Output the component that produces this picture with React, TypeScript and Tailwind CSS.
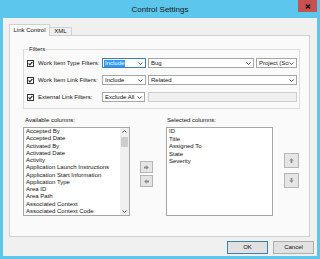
import React from "react";

function Chevron() {
  return (
    <svg width="5" height="3" viewBox="0 0 5 3" className="shrink-0">
      <polyline points="0.5,0.5 2.5,2.5 4.5,0.5" fill="none" stroke="#333" strokeWidth="0.9" />
    </svg>
  );
}

function Check() {
  return (
    <div className="w-[7px] h-[7px] border border-[#333] bg-white flex items-center justify-center shrink-0">
      <svg width="5" height="5" viewBox="0 0 5 5">
        <polyline points="0.6,2.4 1.9,3.8 4.4,0.8" fill="none" stroke="#222" strokeWidth="1.1" />
      </svg>
    </div>
  );
}

function Combo({ text, w, focused, highlight }: { text: string; w?: string; focused?: boolean; highlight?: boolean }) {
  return (
    <div
      className={`h-[10px] ${w ?? "flex-1"} bg-white border ${focused ? "border-[#3c7fb1]" : "border-[#a6a6a6]"} flex items-center pl-[1px] pr-[2px] overflow-hidden`}
    >
      <div className="flex-1 overflow-hidden whitespace-nowrap">
        {highlight ? (
          <span className="bg-[#3399ff] text-white px-[1px] inline-block leading-[7px]">{text}</span>
        ) : (
          <span className="pl-[1px] leading-[7px]">{text}</span>
        )}
      </div>
      <Chevron />
    </div>
  );
}

function Arrow({ dir }: { dir: "right" | "left" | "up" | "down" }) {
  const rot = { right: 0, left: 180, up: -90, down: 90 }[dir];
  return (
    <svg width="5" height="5" viewBox="0 0 5 5" style={{ transform: `rotate(${rot}deg)` }}>
      <polygon points="0,1.6 2.4,1.6 2.4,0.2 4.8,2.5 2.4,4.8 2.4,3.4 0,3.4" fill="#8c8c8c" />
    </svg>
  );
}

function SmallBtn({ dir, size }: { dir: "right" | "left" | "up" | "down"; size: string }) {
  return (
    <div className={`${size} bg-[#e5e5e5] border border-[#b5b5b5] flex items-center justify-center`}>
      <Arrow dir={dir} />
    </div>
  );
}

const available = [
  "Accepted By",
  "Accepted Date",
  "Activated By",
  "Activated Date",
  "Activity",
  "Application Launch Instructions",
  "Application Start Information",
  "Application Type",
  "Area ID",
  "Area Path",
  "Associated Context",
  "Associated Context Code",
];

const selected = ["ID", "Title", "Assigned To", "State", "Severity"];

export default function App() {
  return (
    <div className="w-[320px] h-[259px] bg-[#5cc6ec] flex flex-col px-[3px] pb-[3px] font-['Liberation_Sans',Arial,sans-serif] text-[6px] text-[#111] overflow-hidden">
      {/* Title bar */}
      <div className="h-[18px] relative flex items-center justify-center shrink-0">
        <span className="text-[8px] text-[#1a1a1a] leading-none mt-[1px]">Control Settings</span>
        <div className="absolute right-0 top-0 w-[19px] h-[12px] bg-[#c75050] flex items-center justify-center">
          <svg width="6" height="5" viewBox="0 0 6 5">
            <path d="M0.8 0.5 L5.2 4.5 M5.2 0.5 L0.8 4.5" stroke="#111" strokeWidth="1.2" />
          </svg>
        </div>
      </div>

      {/* Client area */}
      <div className="flex-1 bg-[#f0f0f0] flex flex-col">
        {/* Tabs */}
        <div className="mt-[6px] ml-[6px] flex items-end h-[11px] relative z-10">
          <div className="w-[41px] h-[12px] bg-[#fafafa] border border-[#d0d0d0] border-b-0 flex items-center justify-center mb-[-1px]">
            Link Control
          </div>
          <div className="w-[22px] h-[8px] bg-[#f0f0f0] border border-[#d0d0d0] border-b-0 border-l-0 flex items-center justify-center">
            XML
          </div>
        </div>

        {/* Tab page */}
        <div className="ml-[6px] mr-[7px] h-[202px] border border-[#d0d0d0] bg-[#fafafa] flex flex-col">
          {/* Filters group */}
          <div className="mt-[13px] ml-[13px] mr-[9px] h-[60px] border border-[#dcdcdc] relative flex flex-col pt-[8px] gap-[7px] pl-[3px] pr-[2px]">
            <span className="absolute top-[-4px] left-[4px] bg-[#fafafa] px-[1px] leading-[7px]">Filters</span>
            <div className="flex items-center h-[10px]">
              <Check />
              <span className="ml-[4px] w-[64px] whitespace-nowrap">Work Item Type Filters:</span>
              <Combo text="Include" w="w-[44px]" focused highlight />
              <div className="w-[2px]" />
              <Combo text="Bug" />
              <div className="w-[2px]" />
              <Combo text="Project (Scope)" w="w-[41px]" />
            </div>
            <div className="flex items-center h-[10px]">
              <Check />
              <span className="ml-[4px] w-[64px] whitespace-nowrap">Work Item Link Filters:</span>
              <Combo text="Include" w="w-[44px]" />
              <div className="w-[2px]" />
              <Combo text="Related" />
            </div>
            <div className="flex items-center h-[10px]">
              <Check />
              <span className="ml-[4px] w-[64px] whitespace-nowrap">External Link Filters:</span>
              <Combo text="Exclude All" w="w-[43px]" />
              <div className="w-[3px]" />
              <div className="flex-1 h-[10px] bg-[#f0f0f0] border border-[#cfcfcf]" />
            </div>
          </div>

          {/* Columns */}
          <div className="mt-[8px] ml-[13px] flex items-start">
            <div className="w-[107px] flex flex-col">
              <span className="ml-[2px] leading-[7px] h-[7px]">Available columns:</span>
              <div className="mt-[3px] h-[89px] border border-[#a6a6a6] bg-white flex">
                <div className="flex-1 pl-[2px] overflow-hidden">
                  {available.map((t) => (
                    <div key={t} className="leading-[7.27px] h-[7.27px] whitespace-nowrap">
                      {t}
                    </div>
                  ))}
                </div>
                <div className="w-[9px] bg-[#f0f0f0] flex flex-col items-center">
                  <div className="h-[8px] flex items-center justify-center rotate-180">
                    <Chevron />
                  </div>
                  <div className="mt-[1px] w-[7px] h-[10px] bg-[#cdcdcd]" />
                  <div className="flex-1" />
                  <div className="h-[8px] flex items-center justify-center">
                    <Chevron />
                  </div>
                </div>
              </div>
            </div>

            <div className="ml-[10px] pt-[44px] flex flex-col gap-[2px]">
              <SmallBtn dir="right" size="w-[13px] h-[12px]" />
              <SmallBtn dir="left" size="w-[13px] h-[12px]" />
            </div>

            <div className="ml-[13px] w-[107px] flex flex-col">
              <span className="ml-[1px] leading-[7px] h-[7px]">Selected columns:</span>
              <div className="mt-[3px] h-[89px] border border-[#a6a6a6] bg-white pl-[2px]">
                {selected.map((t) => (
                  <div key={t} className="leading-[7.6px] h-[7.6px] whitespace-nowrap">
                    {t}
                  </div>
                ))}
              </div>
            </div>

            <div className="ml-[11px] pt-[36px] flex flex-col gap-[5px]">
              <SmallBtn dir="up" size="w-[15px] h-[15px]" />
              <SmallBtn dir="down" size="w-[15px] h-[15px]" />
            </div>
          </div>
        </div>

        {/* Buttons */}
        <div className="mt-[4px] mr-[3px] flex justify-end gap-[5px]">
          <div className="w-[41px] h-[13px] bg-[#e1e1e1] border border-[#3c7fb1] flex items-center justify-center">OK</div>
          <div className="w-[41px] h-[13px] bg-[#e1e1e1] border border-[#adadad] flex items-center justify-center">Cancel</div>
        </div>
      </div>
    </div>
  );
}
